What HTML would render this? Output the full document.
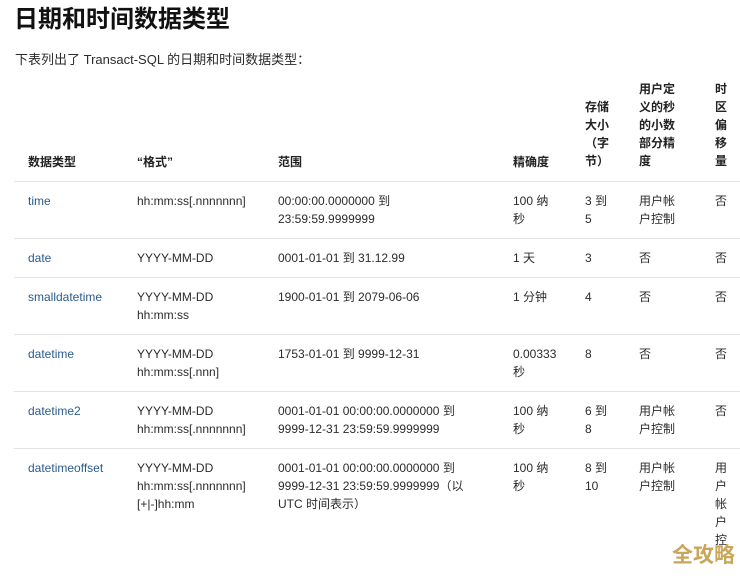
<!DOCTYPE html><html><head><meta charset="utf-8"><style>
body{margin:0;width:740px;height:576px;background:#fff;overflow:hidden;position:relative;font-family:"Liberation Sans","Noto Sans CJK SC",sans-serif;color:#2b2b2b}
.a{position:absolute;font-size:12px;line-height:18px;white-space:nowrap}
.h{font-weight:bold;color:#222}
.l{color:#2a5b8c}
.ln{position:absolute;left:14px;width:726px;height:1px;background:#e3e3e3}
</style></head><body>
<div class="a" style="left:14px;top:3px;font-size:24px;line-height:34px;font-weight:bold;color:#111">日期和时间数据类型</div>
<div class="a" style="left:15px;top:51px;font-size:13px">下表列出了 Transact-SQL 的日期和时间数据类型：</div>
<div class="a h" style="left:28px;top:153px">数据类型</div>
<div class="a h" style="left:137px;top:153px">“格式”</div>
<div class="a h" style="left:278px;top:153px">范围</div>
<div class="a h" style="left:513px;top:153px">精确度</div>
<div class="a h" style="left:585px;top:98px;white-space:normal;width:30px">存储大小（字节）</div>
<div class="a h" style="left:639px;top:80px;white-space:normal;width:40px">用户定义的秒的小数部分精度</div>
<div class="a h" style="left:715px;top:80px;white-space:normal;width:14px">时区偏移量</div>
<div class="ln" style="top:181px"></div><div class="ln" style="top:238px"></div><div class="ln" style="top:277px"></div><div class="ln" style="top:334px"></div><div class="ln" style="top:391px"></div><div class="ln" style="top:448px"></div>

<div class="a l" style="left:28px;top:192px">time</div>
<div class="a" style="left:137px;top:192px">hh:mm:ss[.nnnnnnn]</div>
<div class="a" style="left:278px;top:192px">00:00:00.0000000 到<br>23:59:59.9999999</div>
<div class="a" style="left:513px;top:192px">100 纳<br>秒</div>
<div class="a" style="left:585px;top:192px">3 到<br>5</div>
<div class="a" style="left:639px;top:192px">用户帐<br>户控制</div>
<div class="a" style="left:715px;top:192px">否</div>

<div class="a l" style="left:28px;top:249px">date</div>
<div class="a" style="left:137px;top:249px">YYYY-MM-DD</div>
<div class="a" style="left:278px;top:249px">0001-01-01 到 31.12.99</div>
<div class="a" style="left:513px;top:249px">1 天</div>
<div class="a" style="left:585px;top:249px">3</div>
<div class="a" style="left:639px;top:249px">否</div>
<div class="a" style="left:715px;top:249px">否</div>

<div class="a l" style="left:28px;top:288px">smalldatetime</div>
<div class="a" style="left:137px;top:288px">YYYY-MM-DD<br>hh:mm:ss</div>
<div class="a" style="left:278px;top:288px">1900-01-01 到 2079-06-06</div>
<div class="a" style="left:513px;top:288px">1 分钟</div>
<div class="a" style="left:585px;top:288px">4</div>
<div class="a" style="left:639px;top:288px">否</div>
<div class="a" style="left:715px;top:288px">否</div>

<div class="a l" style="left:28px;top:345px">datetime</div>
<div class="a" style="left:137px;top:345px">YYYY-MM-DD<br>hh:mm:ss[.nnn]</div>
<div class="a" style="left:278px;top:345px">1753-01-01 到 9999-12-31</div>
<div class="a" style="left:513px;top:345px">0.00333<br>秒</div>
<div class="a" style="left:585px;top:345px">8</div>
<div class="a" style="left:639px;top:345px">否</div>
<div class="a" style="left:715px;top:345px">否</div>

<div class="a l" style="left:28px;top:402px">datetime2</div>
<div class="a" style="left:137px;top:402px">YYYY-MM-DD<br>hh:mm:ss[.nnnnnnn]</div>
<div class="a" style="left:278px;top:402px">0001-01-01 00:00:00.0000000 到<br>9999-12-31 23:59:59.9999999</div>
<div class="a" style="left:513px;top:402px">100 纳<br>秒</div>
<div class="a" style="left:585px;top:402px">6 到<br>8</div>
<div class="a" style="left:639px;top:402px">用户帐<br>户控制</div>
<div class="a" style="left:715px;top:402px">否</div>

<div class="a l" style="left:28px;top:459px">datetimeoffset</div>
<div class="a" style="left:137px;top:459px">YYYY-MM-DD<br>hh:mm:ss[.nnnnnnn]<br>[+|-]hh:mm</div>
<div class="a" style="left:278px;top:459px">0001-01-01 00:00:00.0000000 到<br>9999-12-31 23:59:59.9999999（以<br>UTC 时间表示）</div>
<div class="a" style="left:513px;top:459px">100 纳<br>秒</div>
<div class="a" style="left:585px;top:459px">8 到<br>10</div>
<div class="a" style="left:639px;top:459px">用户帐<br>户控制</div>
<div class="a" style="left:715px;top:459px;white-space:normal;width:14px">用户帐户控</div>
<div class="a" style="left:672px;top:543px;font-size:21px;line-height:26px;font-weight:bold;color:#c9a65a">全攻略</div>
</body></html>
